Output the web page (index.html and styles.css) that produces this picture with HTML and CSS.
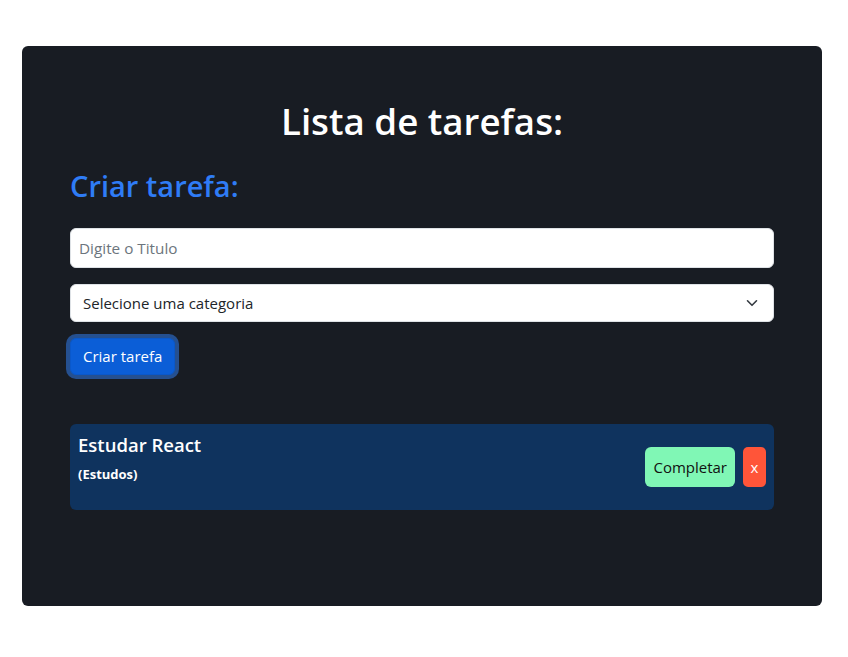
FILE: index.html
```html
<!DOCTYPE html>
<html lang="pt">
<head>
<meta charset="utf-8">
<title>Lista de tarefas</title>
<link rel="stylesheet" href="styles.css">
</head>
<body>
<div class="app">
  <h1 class="title">Lista de tarefas:</h1>
  <h2 class="subtitle">Criar tarefa:</h2>
  <form class="form">
    <input class="field" type="text" placeholder="Digite o Titulo">
    <div class="select">
      <span>Selecione uma categoria</span>
      <svg class="chev" width="12" height="8" viewBox="0 0 12 8"><path d="M1.5 1.8l4.5 4.5 4.5-4.5" fill="none" stroke="#343a40" stroke-width="1.6" stroke-linecap="round" stroke-linejoin="round"/></svg>
    </div>
    <div><button type="button" class="btn-create">Criar tarefa</button></div>
  </form>
  <div class="todo">
    <div class="todo-text">
      <div class="todo-title">Estudar React</div>
      <div class="todo-cat">(Estudos)</div>
    </div>
    <div class="todo-actions">
      <button type="button" class="btn-done">Completar</button>
      <button type="button" class="btn-del">x</button>
    </div>
  </div>
</div>
</body>
</html>
```

FILE: styles.css
```css
* { box-sizing: border-box; }
body {
  margin: 0;
  padding: 46px 0 0 22px;
  background: #fff;
  font-family: "Open Sans", "Noto Sans", sans-serif;
}
.app {
  width: 800px;
  height: 560px;
  background: #181c23;
  border-radius: 6px;
  padding: 53px 48px 48px;
  color: #fff;
}
.title {
  margin: 0 0 26px;
  text-align: center;
  font-size: 36.7px;
  font-weight: 600;
  line-height: 1.2;
}
.subtitle {
  margin: 0 0 24px;
  color: #2f7cf6;
  font-size: 29px;
  font-weight: 600;
  line-height: 1.2;
}
.form {
  display: flex;
  flex-direction: column;
  gap: 16px;
}
.field {
  height: 40px;
  border: 1px solid #dee2e6;
  border-radius: 6px;
  padding: 0 8px;
  font: inherit;
  font-size: 15.3px;
  color: #212529;
}
.field::placeholder { color: #6c757d; }
.select {
  height: 38px;
  background: #fff;
  border: 1px solid #dee2e6;
  border-radius: 6px;
  padding: 0 15px 0 12px;
  display: flex;
  align-items: center;
  justify-content: space-between;
  font-size: 15px;
  color: #212529;
}
.btn-create {
  background: #0b5ed7;
  color: #fff;
  border: 1px solid #0a58ca;
  border-radius: 6px;
  padding: 0 12px;
  height: 37px;
  font: inherit;
  font-size: 15px;
  box-shadow: 0 0 0 4px rgba(49, 132, 253, 0.5);
}
.todo {
  margin-top: 49px;
  background: #0f335e;
  border-radius: 6px;
  height: 86px;
  padding: 10px 8px 0 8px;
  display: flex;
  justify-content: space-between;
  align-items: flex-start;
}
.todo-title {
  font-size: 18.5px;
  font-weight: 600;
  line-height: 1.2;
}
.todo-cat {
  margin-top: 9px;
  font-size: 13px;
  font-weight: 700;
}
.todo-actions {
  display: flex;
  gap: 8px;
  margin-top: 13px;
}
.btn-done {
  height: 40px;
  padding: 0 8px;
  background: #80f7b5;
  border: none;
  border-radius: 6px;
  font: inherit;
  font-size: 15px;
  color: #111;
}
.btn-del {
  height: 40px;
  width: 23px;
  padding: 0;
  background: #ff5539;
  border: none;
  border-radius: 5px;
  font: inherit;
  font-size: 15px;
  color: #fff;
}
```
